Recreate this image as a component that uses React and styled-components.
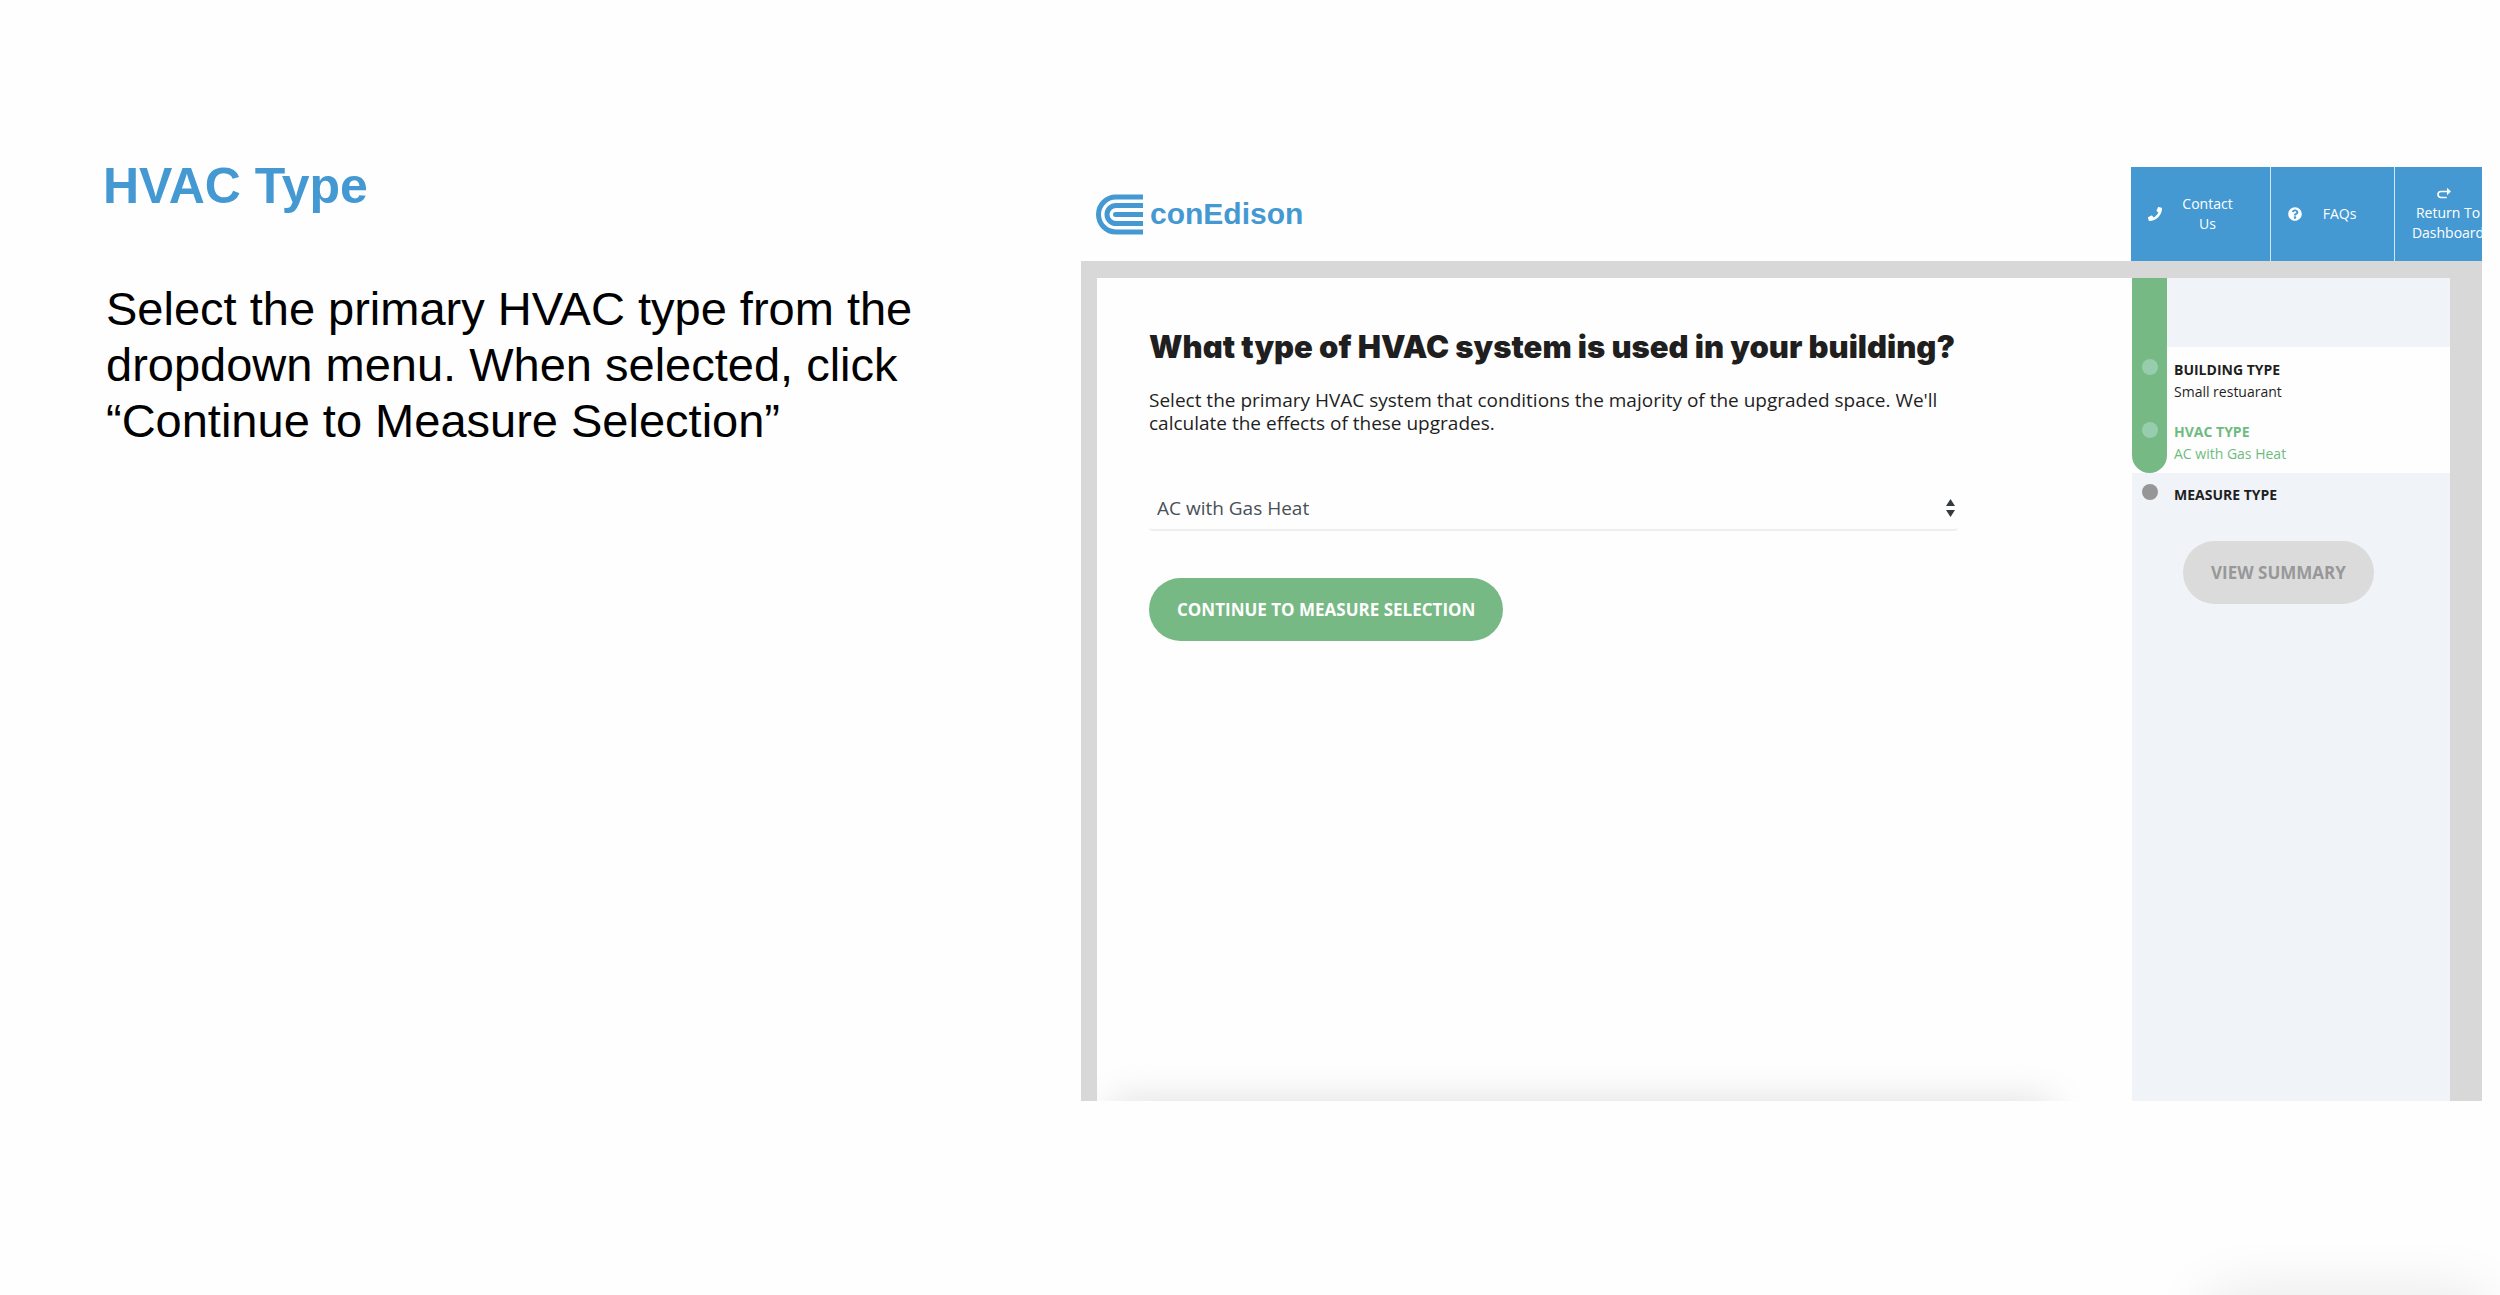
import React, { useState } from "react";
import styled, { createGlobalStyle } from "styled-components";
import { FaPhone, FaQuestionCircle } from "react-icons/fa";

const blue = "#4499d3";
const green = "#77b984";
const paper = "#fefefe";
const ink = "#1f1f1f";
const grey = "#d8d8d8";
const mist = "#f0f3f8";

const GlobalStyle = createGlobalStyle`
  *, *::before, *::after { box-sizing: border-box; }
  body { margin: 0; background: ${paper}; }
  h1, h2, p, ol { margin: 0; padding: 0; }
  button, select { font: inherit; }
`;

const Slide = styled.main`
  position: relative;
  display: grid;
  grid-template-columns: 1081fr 1401fr;
  min-height: 100vh;
  padding: 167px 18px 194px 0;
  overflow: hidden;
`;

const CornerShadow = styled.div`
  position: absolute;
  right: 16px;
  bottom: -60px;
  width: 274px;
  height: 60px;
  box-shadow: 0 0 60px rgba(0, 0, 0, 0.1);
`;

const Instructions = styled.section`
  padding: 0 160px 0 103px;
  font-family: "Liberation Sans", Arial, sans-serif;
`;

const SlideTitle = styled.h1`
  padding-bottom: 76px;
  color: ${blue};
  font-size: 50px;
  font-weight: 700;
  line-height: 38px;
`;

const SlideText = styled.p`
  padding-left: 3px;
  color: #000;
  font-size: 47px;
  line-height: 56px;
`;

const Screen = styled.section`
  display: flex;
  flex-direction: column;
  min-width: 0;
  overflow: hidden;
  font-family: "Open Sans", "Noto Sans", sans-serif;
  color: ${ink};
`;

const Header = styled.header`
  display: flex;
  justify-content: space-between;
  height: 94px;
`;

const Logo = styled.a`
  display: flex;
  align-items: center;
  gap: 7px;
  padding-left: 15px;
  color: ${blue};
  font-family: "Liberation Sans", Arial, sans-serif;
  font-size: 30px;
  font-weight: 700;
  text-decoration: none;
`;

const Nav = styled.nav`
  display: flex;
  flex: none;
  width: 351px;
  overflow: hidden;
`;

const NavLink = styled.a`
  display: flex;
  flex: none;
  flex-direction: ${(p) => (p.$stacked ? "column" : "row")};
  align-items: center;
  justify-content: ${(p) => (p.$stacked ? "center" : "flex-start")};
  width: ${(p) => p.$width}px;
  padding: ${(p) => (p.$stacked ? "0 16px" : "0 17px")};
  background: ${blue};
  color: #fff;
  font-size: 14px;
  line-height: 20px;
  text-align: center;
  text-decoration: none;

  & + & { border-left: 1px solid #d3e6f4; }
`;

const NavIcon = styled.span`
  display: flex;
  flex: none;
  padding-right: ${(p) => (p.$stacked ? "8px" : "0")};
`;

const NavText = styled.span`
  flex: ${(p) => (p.$stacked ? "none" : "1")};
  padding: ${(p) => (p.$stacked ? "0" : "0 20px")};
`;

const Frame = styled.div`
  display: flex;
  flex: 1;
  padding: 17px 32px 0 16px;
  background: ${grey};
`;

const Panel = styled.div`
  position: relative;
  flex: 1;
  min-width: 0;
  padding: 51px 40px 40px 52px;
  background: ${paper};
  overflow: hidden;
`;

const PanelShadow = styled.div`
  position: absolute;
  right: 80px;
  bottom: -60px;
  left: 14px;
  height: 60px;
  box-shadow: 0 0 40px rgba(0, 0, 0, 0.13);
`;

const Question = styled.h2`
  font-family: Inter, "Open Sans", sans-serif;
  font-feature-settings: "cv11";
  font-size: 31px;
  font-weight: 900;
  line-height: 36px;
`;

const Hint = styled.p`
  max-width: 820px;
  padding-top: 24px;
  font-size: 19px;
  line-height: 23px;
`;

const SelectBox = styled.div`
  position: relative;
  max-width: 809px;
  margin: 51px 0 47px;
`;

const Select = styled.select`
  appearance: none;
  display: block;
  width: 100%;
  height: 45px;
  padding: 0 32px 0 8px;
  border: 0;
  border-bottom: 2px solid #eeeeee;
  border-radius: 4px;
  background: transparent;
  color: #495057;
  font-size: 19px;
`;

const SelectArrows = styled.svg`
  position: absolute;
  top: 13px;
  right: 3px;
  pointer-events: none;
`;

const Pill = styled.button`
  height: 63px;
  padding: 0 28px;
  border: 0;
  border-radius: 32px;
  background: ${(p) => (p.disabled ? "#dbdbdb" : green)};
  color: ${(p) => (p.disabled ? "#989898" : "#fff")};
  font-size: 17px;
  font-weight: 700;
  white-space: nowrap;
`;

const Sidebar = styled.aside`
  flex: none;
  width: 318px;
  background: ${mist};
`;

const Steps = styled.ol`
  list-style: none;
`;

const Done = styled.div`
  display: grid;
  grid-template-columns: 35px 1fr;
  background: ${paper};
`;

const Track = styled.div`
  display: flex;
  flex-direction: column;
  align-items: center;
  gap: 47px;
  padding: 81px 0 35px;
  border-radius: 0 0 18px 18px;
  background: ${green};
`;

const Dot = styled.span`
  display: block;
  width: 16px;
  height: 16px;
  border-radius: 50%;
  background: ${(p) => (p.$pending ? "#969696" : "#97ccad")};
`;

const DoneSteps = styled(Steps)`
  border-top: 69px solid ${mist};
  padding: 12px 0 1px;
`;

const Step = styled.li`
  padding: 0 0 18px 7px;
  color: ${(p) => (p.$current ? "#6fbb7f" : ink)};
  font-size: 14px;
  line-height: 22px;

  &:last-child { padding-bottom: 0; }
`;

const StepName = styled.strong`
  display: block;
`;

const Pending = styled.div`
  display: grid;
  grid-template-columns: 35px 1fr;
  padding-top: 11px;
`;

const PendingMark = styled.div`
  display: flex;
  justify-content: center;
`;

const SummaryRow = styled.div`
  display: flex;
  justify-content: center;
  padding: 35px 25px 0 0;
`;

function LogoMark() {
  return (
    <svg width="47" height="41" viewBox="0 0 47 41" fill="none" stroke="currentColor" aria-hidden="true">
      <path d="M47 3H20a17.5 17.5 0 0 0 0 35H47" strokeWidth="5" />
      <path d="M47 11.500H20a9 9 0 0 0 0 18H47" strokeWidth="5" />
      <path d="M47 20.500H19.500" strokeWidth="5" />
      <circle cx="19.500" cy="20.500" r="2.500" fill="currentColor" stroke="none" />
    </svg>
  );
}

function ReturnIcon() {
  return (
    <svg width="14" height="18" viewBox="0 0 14 18" fill="none" stroke="currentColor" aria-hidden="true">
      <path d="M10.500 6.500H4a3 3 0 0 0 0 6H9" strokeWidth="1.700" strokeLinecap="round" />
      <path d="M10 2.800L14 6.500 10 10.200Z" fill="currentColor" stroke="none" />
    </svg>
  );
}

export default function App() {
  const [hvac, setHvac] = useState("AC with Gas Heat");

  return (
    <>
      <GlobalStyle />
      <Slide>
        <Instructions>
          <SlideTitle>HVAC Type</SlideTitle>
          <SlideText>
            Select the primary HVAC type from the dropdown menu. When selected, click “Continue to Measure Selection”
          </SlideText>
        </Instructions>

        <Screen>
          <Header>
            <Logo href="#home">
              <LogoMark />
              conEdison
            </Logo>
            <Nav>
              <NavLink href="#contact" $width={139}>
                <NavIcon>
                  <FaPhone size={14} />
                </NavIcon>
                <NavText>Contact Us</NavText>
              </NavLink>
              <NavLink href="#faqs" $width={124}>
                <NavIcon>
                  <FaQuestionCircle size={14} />
                </NavIcon>
                <NavText>FAQs</NavText>
              </NavLink>
              <NavLink href="#dashboard" $width={107} $stacked>
                <NavIcon $stacked>
                  <ReturnIcon />
                </NavIcon>
                <NavText $stacked>Return To Dashboard</NavText>
              </NavLink>
            </Nav>
          </Header>

          <Frame>
            <Panel>
              <Question>
                <label htmlFor="hvac">What type of HVAC system is used in your building?</label>
              </Question>
              <Hint>
                Select the primary HVAC system that conditions the majority of the upgraded space. We'll calculate the
                effects of these upgrades.
              </Hint>
              <SelectBox>
                <Select id="hvac" value={hvac} onChange={(e) => setHvac(e.target.value)}>
                  <option>AC with Gas Heat</option>
                </Select>
                <SelectArrows width="9" height="18" viewBox="0 0 9 18" fill="#343a40" aria-hidden="true">
                  <path d="M4.500 0L9 7H0ZM0 11H9L4.500 18Z" />
                </SelectArrows>
              </SelectBox>
              <Pill type="button">CONTINUE TO MEASURE SELECTION</Pill>
              <PanelShadow />
            </Panel>

            <Sidebar>
              <Done>
                <Track>
                  <Dot />
                  <Dot />
                </Track>
                <DoneSteps>
                  <Step>
                    <StepName>BUILDING TYPE</StepName>
                    Small restuarant
                  </Step>
                  <Step $current>
                    <StepName>HVAC TYPE</StepName>
                    AC with Gas Heat
                  </Step>
                </DoneSteps>
              </Done>
              <Pending>
                <PendingMark>
                  <Dot $pending />
                </PendingMark>
                <Steps>
                  <Step>
                    <StepName>MEASURE TYPE</StepName>
                  </Step>
                </Steps>
              </Pending>
              <SummaryRow>
                <Pill type="button" disabled>
                  VIEW SUMMARY
                </Pill>
              </SummaryRow>
            </Sidebar>
          </Frame>
        </Screen>
        <CornerShadow />
      </Slide>
    </>
  );
}
